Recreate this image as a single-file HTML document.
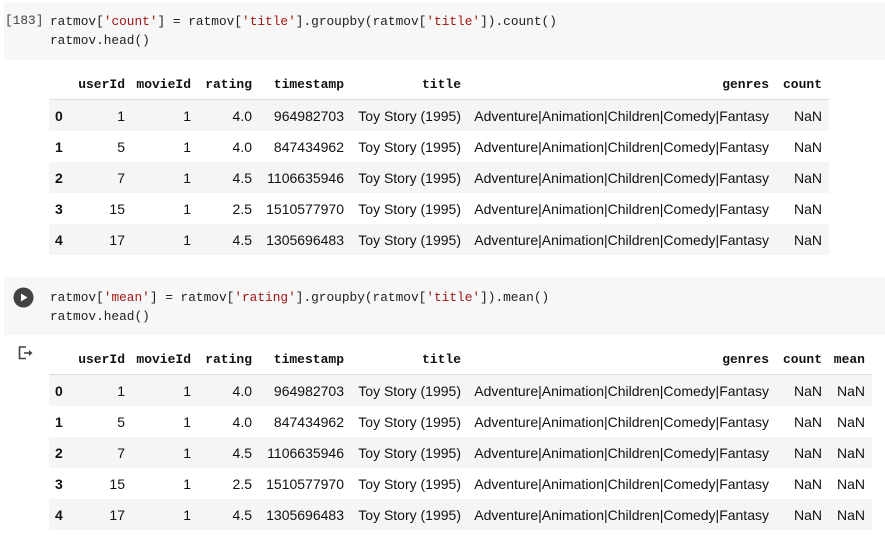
<!DOCTYPE html>
<html><head><meta charset="utf-8"><style>
body{margin:0;width:885px;height:539px;background:#fff;position:relative;overflow:hidden;font-family:"Liberation Sans",Arial,sans-serif;}
.cell{position:absolute;left:4px;right:0;background:#f7f7f7;}
.code{position:absolute;left:50px;font-family:"Liberation Mono",monospace;font-size:12.8px;color:#212121;line-height:19px;white-space:pre;}
.s{color:#a31515}
.num{position:absolute;left:5px;font-family:"Liberation Mono",monospace;font-size:12.8px;color:#424242;}
table{position:absolute;left:49px;border-collapse:collapse;table-layout:fixed;font-size:14px;color:#111;}
th{font-family:"Liberation Mono",monospace;font-size:13px;font-weight:bold;text-align:right;padding:0 7px 0 0;height:30px;border-bottom:1px solid #ddd;}
td{text-align:right;padding:0 7px 0 0;height:31px;white-space:nowrap;}
td.i{text-align:left;padding-left:6px;font-weight:bold;}
tr.g td{background:#f5f5f5}
</style></head><body>
<div class="cell" style="top:2px;height:58px"></div>
<div class="num" style="top:13px">[183]</div>
<div class="code" style="top:12px">ratmov[<span class="s">'count'</span>] = ratmov[<span class="s">'title'</span>].groupby(ratmov[<span class="s">'title'</span>]).count()
ratmov.head()</div>
<table style="top:69px;width:780px">
<colgroup><col style="width:21px"><col style="width:62px"><col style="width:66px"><col style="width:61px"><col style="width:92px"><col style="width:117px"><col style="width:308px"><col style="width:53px"></colgroup>
<tr><th></th><th>userId</th><th>movieId</th><th>rating</th><th>timestamp</th><th>title</th><th>genres</th><th>count</th></tr>
<tr class="g"><td class="i">0</td><td>1</td><td>1</td><td>4.0</td><td>964982703</td><td>Toy Story (1995)</td><td>Adventure|Animation|Children|Comedy|Fantasy</td><td>NaN</td></tr>
<tr><td class="i">1</td><td>5</td><td>1</td><td>4.0</td><td>847434962</td><td>Toy Story (1995)</td><td>Adventure|Animation|Children|Comedy|Fantasy</td><td>NaN</td></tr>
<tr class="g"><td class="i">2</td><td>7</td><td>1</td><td>4.5</td><td>1106635946</td><td>Toy Story (1995)</td><td>Adventure|Animation|Children|Comedy|Fantasy</td><td>NaN</td></tr>
<tr><td class="i">3</td><td>15</td><td>1</td><td>2.5</td><td>1510577970</td><td>Toy Story (1995)</td><td>Adventure|Animation|Children|Comedy|Fantasy</td><td>NaN</td></tr>
<tr class="g"><td class="i">4</td><td>17</td><td>1</td><td>4.5</td><td>1305696483</td><td>Toy Story (1995)</td><td>Adventure|Animation|Children|Comedy|Fantasy</td><td>NaN</td></tr>
</table>

<div class="cell" style="top:277px;height:58px"></div>
<svg style="position:absolute;left:13px;top:287px" width="21" height="21"><circle cx="10.5" cy="10.5" r="10" fill="#424242"/><path d="M8 6.5 L14.5 10.5 L8 14.5Z" fill="#fff"/></svg>
<div class="code" style="top:288px">ratmov[<span class="s">'mean'</span>] = ratmov[<span class="s">'rating'</span>].groupby(ratmov[<span class="s">'title'</span>]).mean()
ratmov.head()</div>
<svg style="position:absolute;left:18px;top:346px" width="16" height="14"><path d="M8 1H1.5V12.5H8" fill="none" stroke="#424242" stroke-width="1.6"/><path d="M6 7H12" stroke="#424242" stroke-width="1.6"/><path d="M11 4L14.5 7L11 10Z" fill="#424242"/></svg>
<table style="top:344px;width:823px">
<colgroup><col style="width:21px"><col style="width:62px"><col style="width:66px"><col style="width:61px"><col style="width:92px"><col style="width:117px"><col style="width:308px"><col style="width:53px"><col style="width:43px"></colgroup>
<tr><th></th><th>userId</th><th>movieId</th><th>rating</th><th>timestamp</th><th>title</th><th>genres</th><th>count</th><th>mean</th></tr>
<tr class="g"><td class="i">0</td><td>1</td><td>1</td><td>4.0</td><td>964982703</td><td>Toy Story (1995)</td><td>Adventure|Animation|Children|Comedy|Fantasy</td><td>NaN</td><td>NaN</td></tr>
<tr><td class="i">1</td><td>5</td><td>1</td><td>4.0</td><td>847434962</td><td>Toy Story (1995)</td><td>Adventure|Animation|Children|Comedy|Fantasy</td><td>NaN</td><td>NaN</td></tr>
<tr class="g"><td class="i">2</td><td>7</td><td>1</td><td>4.5</td><td>1106635946</td><td>Toy Story (1995)</td><td>Adventure|Animation|Children|Comedy|Fantasy</td><td>NaN</td><td>NaN</td></tr>
<tr><td class="i">3</td><td>15</td><td>1</td><td>2.5</td><td>1510577970</td><td>Toy Story (1995)</td><td>Adventure|Animation|Children|Comedy|Fantasy</td><td>NaN</td><td>NaN</td></tr>
<tr class="g"><td class="i">4</td><td>17</td><td>1</td><td>4.5</td><td>1305696483</td><td>Toy Story (1995)</td><td>Adventure|Animation|Children|Comedy|Fantasy</td><td>NaN</td><td>NaN</td></tr>
</table>
</body></html>
